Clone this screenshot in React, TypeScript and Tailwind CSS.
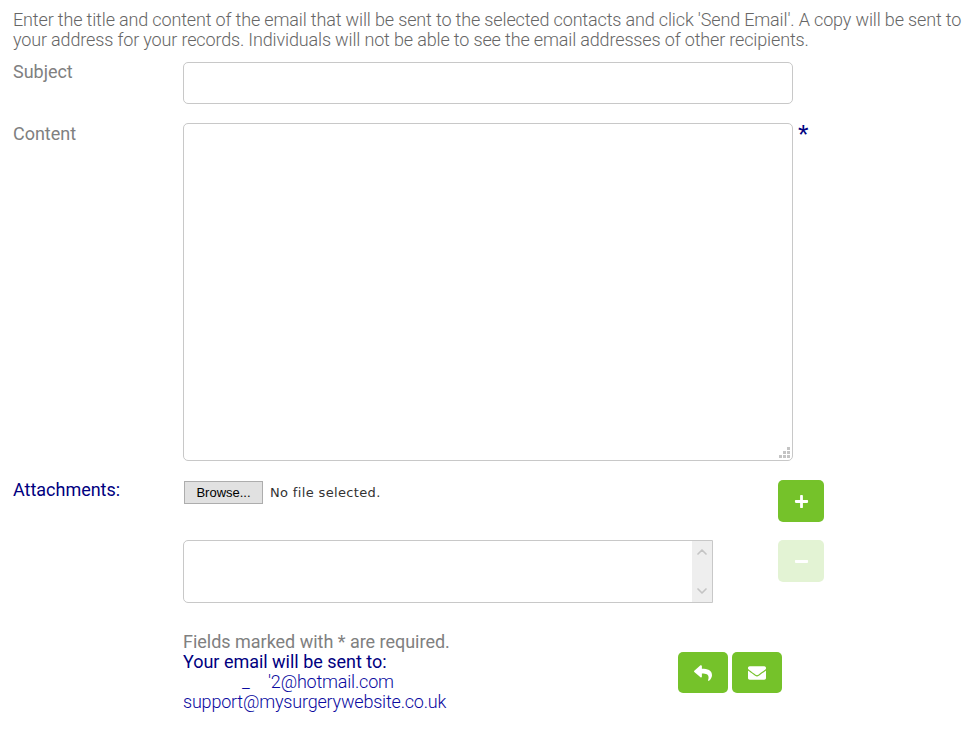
import { FaPlus, FaMinus, FaReply, FaEnvelope } from 'react-icons/fa';
import { ChevronUp, ChevronDown } from 'lucide-react';

const labelClass = 'w-[170px] shrink-0 text-[18px] leading-[20px] tracking-[-0.02px] font-[450]';
const boxClass = 'block border border-[#c8c8c8] rounded-[5px] bg-white outline-none';

const IconButton = ({ children, className }: { children: React.ReactNode; className: string }) => (
  <button type="button" className={`flex items-center justify-center rounded-[5px] text-white ${className}`}>
    {children}
  </button>
);

export default function App() {
  return (
    <div className="w-[971px] h-[729px] bg-white overflow-hidden pl-[13px] pt-[10px] font-['Roboto',sans-serif] text-[#808080]">
      <p className="w-[955px] text-[18px] leading-[20px] font-light text-[#666666] tracking-[-0.15px]">
        Enter the title and content of the email that will be sent to the selected contacts and click 'Send Email'. A copy will be sent to your address for your records. Individuals will not be able to see the email addresses of other recipients.
      </p>

      {/* Subject */}
      <div className="flex mt-[12px]">
        <label className={labelClass}>Subject</label>
        <input className={`${boxClass} w-[610px] h-[42px]`} />
      </div>

      {/* Content */}
      <div className="flex mt-[19px]">
        <label className={`${labelClass} pt-[1px]`}>Content</label>
        <div className="relative">
          <textarea className={`${boxClass} w-[610px] h-[338px] resize-none`} />
          <svg className="absolute right-[3px] bottom-[3px]" width="11" height="11" viewBox="0 0 11 11" fill="#c4c4c4">
            <rect x="8" y="0" width="3" height="3" />
            <rect x="4" y="4" width="3" height="3" />
            <rect x="8" y="4" width="3" height="3" />
            <rect x="0" y="8" width="3" height="3" />
            <rect x="4" y="8" width="3" height="3" />
            <rect x="8" y="8" width="3" height="3" />
          </svg>
        </div>
        <span className="ml-[5px] text-[27px] leading-[24px] text-[#000080] font-['Liberation_Sans',sans-serif]">*</span>
      </div>

      {/* Attachments */}
      <div className="flex mt-[19px]">
        <label className={`${labelClass} text-[#000080]`}>Attachments:</label>
        <div className="w-[595px] flex items-start pt-[1px]">
          <button type="button" className="ml-[1px] w-[79px] h-[23px] bg-[#e1e1e1] border border-[#adadad] text-[13px] leading-[21px] text-black font-['Liberation_Sans',sans-serif]">
            Browse...
          </button>
          <span className="ml-[7px] text-[13px] leading-[23px] tracking-[0.35px] text-[#333333] font-['DejaVu_Sans',sans-serif]">No file selected.</span>
        </div>
        <IconButton className="w-[46px] h-[42px] bg-[#75c22a]">
          <FaPlus className="w-[15px] h-[15px]" />
        </IconButton>
      </div>

      <div className="flex mt-[18px]">
        <div className="w-[170px] shrink-0" />
        <div className="w-[530px] h-[63px] flex justify-end border border-[#c8c8c8] rounded-l-[5px] bg-white">
          <div className="w-[20px] h-full flex flex-col items-center justify-between bg-[#eeeeee] text-[#c4c4c4] py-[3px]">
            <ChevronUp className="w-[16px] h-[16px]" strokeWidth={2.5} />
            <ChevronDown className="w-[16px] h-[16px]" strokeWidth={2.5} />
          </div>
        </div>
        <IconButton className="ml-[65px] w-[46px] h-[42px] bg-[#e3f3d4]">
          <FaMinus className="w-[15px] h-[15px]" />
        </IconButton>
      </div>

      {/* Footer */}
      <div className="flex mt-[29px]">
        <div className="w-[170px] shrink-0" />
        <div className="w-[495px] text-[18px] leading-[20px]">
          <div className="font-[450] tracking-[-0.02px]">Fields marked with * are required.</div>
          <div className="font-[450] tracking-[-0.02px] text-[#000080]">Your email will be sent to:</div>
          <div className="pl-[59px] font-light text-[#0a0aa0] tracking-[-0.2px]">
            <span className="inline-block w-[26px]">_</span>'2@hotmail.com
          </div>
          <div className="font-light text-[#0a0aa0] tracking-[-0.2px]">support@mysurgerywebsite.co.uk</div>
        </div>
        <div className="flex gap-[4px] mt-[20px]">
          <IconButton className="w-[50px] h-[41px] bg-[#75c22a]">
            <FaReply className="w-[18px] h-[18px]" />
          </IconButton>
          <IconButton className="w-[50px] h-[41px] bg-[#75c22a]">
            <FaEnvelope className="w-[18px] h-[18px]" />
          </IconButton>
        </div>
      </div>
    </div>
  );
}
